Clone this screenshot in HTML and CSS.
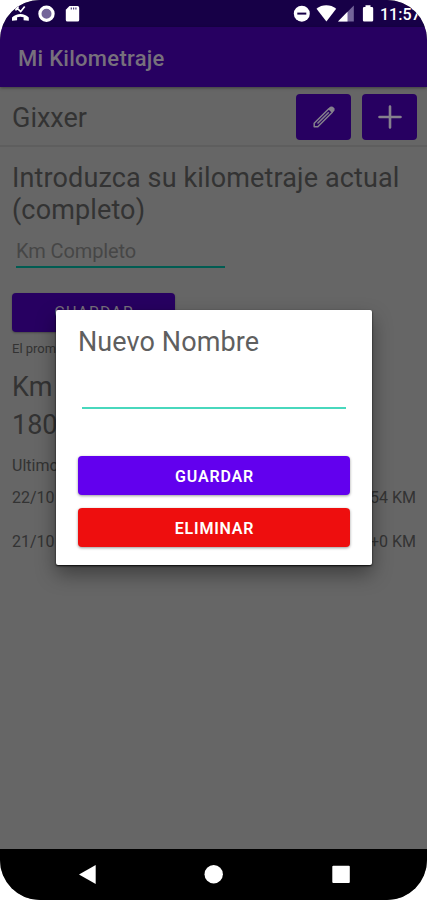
FILE: index.html
```
<!DOCTYPE html>
<html lang="es">
<head>
<meta charset="utf-8">
<title>Mi Kilometraje</title>
<link rel="stylesheet" href="styles.css">
</head>
<body>
<div class="phone">
  <header class="status">
    <svg class="status-left" width="82" height="27" viewBox="0 0 82 27" fill="#fff">
      <path d="M12 17.500c4.500-4.700 12.500-4.700 16.800 0v3.300l-5.200-.6v-3c-2.200-.7-4.400-.7-6.500 0v3l-5.100.6z"/>
      <path d="M16 10.500V7H19M16.200 7.300l4.500 4.200 4-5" fill="none" stroke="#fff" stroke-width="1.700"/>
      <circle cx="46.500" cy="13.700" r="6.600" fill="#74659a" stroke="#fff" stroke-width="3.200"/>
      <path d="M69.500 6h8q1.700 0 1.700 1.700v12.200q0 1.600-1.700 1.600H67.500q-1.700 0-1.700-1.600V9.700z"/>
      <path d="M71.300 7.500v2M73.600 7.500v2M75.900 7.500v2" stroke="#4a3a78" stroke-width="1.200"/>
    </svg>
    <div class="status-right">
      <svg width="86" height="27" viewBox="292 0 86 27" fill="#fff">
        <circle cx="301.800" cy="13.700" r="8"/>
        <path d="M297.300 13.600h9" stroke="#170047" stroke-width="2"/>
        <path d="M316.500 8.700c5.500-4.600 14-4.600 19.700 0L326.400 21.500z"/>
        <path d="M353.800 5.500v16H338z" fill="#74659a"/>
        <path d="M347.500 11.800v9.700H338z"/>
        <path d="M365.500 5.300h5v1.800h1.400q1.300 0 1.300 1.300v11.800q0 1.300-1.300 1.300h-7.700q-1.300 0-1.300-1.300V8.400q0-1.300 1.300-1.300h1.300z"/>
      </svg>
      <span class="clock">11:57</span>
    </div>
  </header>
  <h1 class="appbar">Mi Kilometraje</h1>
  <main class="content">
    <div class="vehicle">
      <span class="name">Gixxer</span>
      <div class="square">
        <svg width="24" height="24" viewBox="0 0 24 24" fill="none" stroke="#85808d" stroke-width="1.500" stroke-linejoin="round"><path d="M2.200 21.800v-3.600L16.800 3.800l3.500 3.500L5.800 21.800z M5.500 18.500L16.800 7.200"/><path d="M17.500 3.200q1.500-1.500 2.900-.8 2 1 1.500 2.600l-1.200 1.400z" fill="#85808d"/></svg>
      </div>
      <div class="square">
        <svg width="24" height="24" viewBox="0 0 24 24" stroke="#85808d" stroke-width="2.600" stroke-linecap="round"><path d="M12 1.500v21M1.500 12h21"/></svg>
      </div>
    </div>
    <div class="details">
      <h2 class="prompt">Introduzca su kilometraje actual (completo)</h2>
      <div class="field">Km Completo</div>
      <div class="save">GUARDAR</div>
      <div class="average">El prom</div>
      <div class="total">Km<br>180</div>
      <div class="recent">Ultimo</div>
      <div class="entry"><span>22/10</span><span>54 KM</span></div>
      <div class="entry"><span>21/10</span><span>+0 KM</span></div>
    </div>
  </main>
  <nav class="nav">
    <svg width="427" height="51" viewBox="0 0 427 51" fill="#fff"><path d="M79 25.500L95.700 16v19z"/><circle cx="213.700" cy="25.300" r="9.200"/><rect x="332.300" y="16.700" width="17.500" height="17.300" rx="1"/></svg>
  </nav>
  <section class="dialog">
    <h2 class="dialog-title">Nuevo Nombre</h2>
    <div class="dialog-input"></div>
    <div class="action">GUARDAR</div>
    <div class="action danger">ELIMINAR</div>
  </section>
</div>
</body>
</html>
```
FILE: styles.css
```
* { box-sizing: border-box; }
body { margin: 0; background: #fff; font-family: Roboto, sans-serif; }
h1, h2 { margin: 0; font-weight: 400; }
svg { display: block; }
.phone {
  position: relative;
  display: flex;
  flex-direction: column;
  width: 427px;
  height: 900px;
  overflow: hidden;
  border-radius: 40px;
  background: #666;
}
.status {
  display: flex;
  justify-content: space-between;
  height: 27px;
  flex: none;
  background: #170047;
}
.status-right { display: flex; width: 135px; }
.clock {
  flex: none;
  padding-left: 2px;
  color: #fff;
  font-size: 16px;
  font-weight: 500;
  line-height: 29px;
}
.appbar {
  height: 60px;
  flex: none;
  padding-left: 18px;
  background: #270061;
  box-shadow: 0 1px 3px rgba(0,0,0,.4);
  color: #77707c;
  font-size: 22px;
  font-weight: 500;
  line-height: 63px;
  letter-spacing: 0.28px;
  z-index: 1;
}
.content { flex: 1; color: #333; }
.vehicle {
  display: flex;
  align-items: center;
  gap: 11px;
  height: 60px;
  padding: 1px 10px 0 12px;
  border-bottom: 2px solid #5e5e5e;
}
.name { flex: 1; font-size: 27px; line-height: 32px; padding-top: 2px; }
.square {
  display: flex;
  align-items: center;
  justify-content: center;
  width: 55px;
  height: 46px;
  border-radius: 4px;
  background: #270061;
}
.details { padding: 15px 11px 0 12px; }
.prompt { font-size: 27px; line-height: 32px; letter-spacing: 0.13px; }
.field {
  width: 209px;
  height: 42px;
  margin-left: 4px;
  border-bottom: 2px solid #015c52;
  color: #464646;
  font-size: 20px;
  line-height: 51px;
  letter-spacing: -0.1px;
}
.save {
  width: 163px;
  height: 39px;
  margin-top: 25px;
  border-radius: 4px;
  background: #270061;
  box-shadow: 0 1px 2px rgba(0,0,0,.3);
  color: #77707c;
  font-size: 16px;
  line-height: 39px;
  letter-spacing: 1.1px;
  text-indent: 1px;
  text-align: center;
}
.average { margin-top: 8px; font-size: 13px; line-height: 17px; }
.total { margin-top: 11px; font-size: 27px; line-height: 38px; }
.recent { margin-top: 12px; font-size: 16px; line-height: 19px; }
.entry {
  display: flex;
  justify-content: space-between;
  height: 44px;
  font-size: 16px;
  line-height: 46px;
}
.nav { height: 51px; flex: none; background: #000; }
.dialog {
  position: absolute;
  top: 310px;
  left: 56px;
  z-index: 2;
  width: 316px;
  height: 255px;
  padding: 16px 22px 0;
  border-radius: 2px;
  background: #fff;
  box-shadow: 0 1px 2px rgba(0,0,0,.9), 0 9px 20px rgba(0,0,0,.4);
}
.dialog-title { color: #5f5f5f; font-size: 27px; line-height: 32px; letter-spacing: 0.1px; }
.dialog-input { height: 51px; margin: 0 4px 47px; border-bottom: 2px solid #48d8bd; }
.action {
  height: 39px;
  margin-bottom: 13px;
  border-radius: 4px;
  background: #6200ee;
  box-shadow: 0 1px 3px rgba(0,0,0,.4);
  color: #fff;
  font-size: 16px;
  font-weight: 600;
  line-height: 41px;
  letter-spacing: 0.8px;
  text-indent: 1px;
  text-align: center;
}
.danger { background: #ee0e0e; }
```
